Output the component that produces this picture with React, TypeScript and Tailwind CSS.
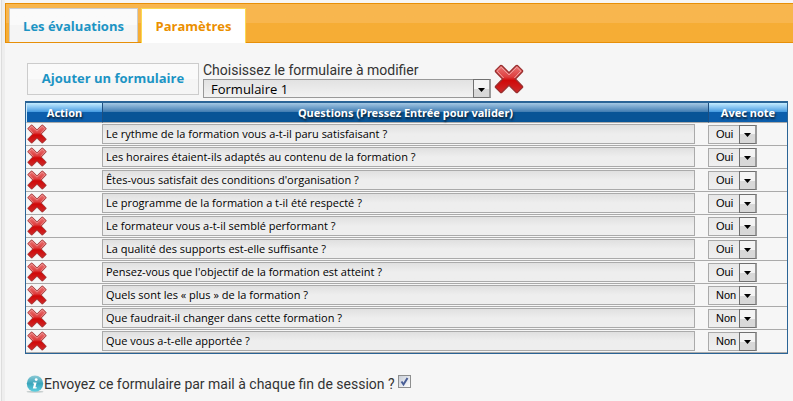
import React, { useState } from 'react';

const initialQuestions = [
  { text: 'Le rythme de la formation vous a-t-il paru satisfaisant ?', note: 'Oui' },
  { text: 'Les horaires étaient-ils adaptés au contenu de la formation ?', note: 'Oui' },
  { text: "Êtes-vous satisfait des conditions d'organisation ?", note: 'Oui' },
  { text: 'Le programme de la formation a t-il été respecté ?', note: 'Oui' },
  { text: 'Le formateur vous a-t-il semblé performant ?', note: 'Oui' },
  { text: 'La qualité des supports est-elle suffisante ?', note: 'Oui' },
  { text: "Pensez-vous que l'objectif de la formation est atteint ?", note: 'Oui' },
  { text: 'Quels sont les « plus » de la formation ?', note: 'Non' },
  { text: 'Que faudrait-il changer dans cette formation ?', note: 'Non' },
  { text: 'Que vous a-t-elle apportée ?', note: 'Non' },
];

function CrossIcon({ className }: { className: string }) {
  return (
    <svg viewBox="0 0 30 30" className={className} aria-hidden="true">
      <defs>
        <linearGradient id="cross" x1="0" y1="0" x2="0" y2="1">
          <stop offset="0" stopColor="#ea7878" />
          <stop offset="0.42" stopColor="#de4040" />
          <stop offset="0.55" stopColor="#d00808" />
          <stop offset="1" stopColor="#cc2c2c" />
        </linearGradient>
      </defs>
      <path
        d="M6.4 1.6 Q7.2 1 8 1.8 L15 8.8 L22 1.8 Q22.8 1 23.6 1.6 L28.4 6.4 Q29 7.2 28.2 8 L21.4 15 L28.2 22 Q29 22.8 28.4 23.6 L23.6 28.4 Q22.8 29 22 28.2 L15 21.4 L8 28.2 Q7.2 29 6.4 28.4 L1.6 23.6 Q1 22.8 1.8 22 L8.6 15 L1.8 8 Q1 7.2 1.6 6.4 Z"
        fill="url(#cross)"
        stroke="#983030"
        strokeWidth="1.3"
        strokeLinejoin="round"
      />
      <path
        d="M9.6 14 L3.2 7.2 L7.2 3.2 L15 10.8 L22.8 3.2 L26.8 7.2 L20.4 14"
        fill="none"
        stroke="#f0a4a4"
        strokeWidth="1"
      />
    </svg>
  );
}

function InfoIcon() {
  return (
    <svg viewBox="0 0 18 18" className="size-[18px]" aria-hidden="true">
      <defs>
        <linearGradient id="info" x1="0" y1="0" x2="0" y2="1">
          <stop offset="0" stopColor="#8fcbd6" />
          <stop offset="0.5" stopColor="#3aa5bb" />
          <stop offset="1" stopColor="#5fd0e0" />
        </linearGradient>
      </defs>
      <ellipse cx="9" cy="16.8" rx="8.5" ry="1" fill="#c4cccc" />
      <circle cx="9" cy="8.6" r="8.2" fill="url(#info)" />
      <circle cx="10.2" cy="4.6" r="1.4" fill="#fff" />
      <path d="M7 7.4 H10.6 L9.4 12.2 H10.8 L10.5 13.4 H6.8 L8.1 8.5 H6.8 Z" fill="#fff" />
    </svg>
  );
}

function ArrowButton() {
  return (
    <span className="pointer-events-none absolute inset-y-0 right-0 flex w-[18px] items-center justify-center border border-r-2 border-[#707070] border-r-[#999] bg-linear-to-b from-[#f4f4f4] from-50% to-[#d8d8d8] to-50% pt-0.5">
      <svg viewBox="0 0 7 4" className="h-1 w-[7px]" aria-hidden="true">
        <path d="M0 0 H7 L3.5 4 Z" fill="#000" />
      </svg>
    </span>
  );
}

export default function App() {
  const [questions, setQuestions] = useState(initialQuestions);
  const [sendMail, setSendMail] = useState(true);

  const update = (index: number, patch: Partial<(typeof initialQuestions)[number]>) =>
    setQuestions(questions.map((q, i) => (i === index ? { ...q, ...patch } : q)));

  return (
    <div className="flex min-h-screen bg-[#f6f6f6] font-['Trebuchet_MS','Open_Sans',sans-serif] text-[#333]">
      <div className="w-[5px] shrink-0 border-r-[3px] border-l border-[#eee] border-l-[#f6f6f6] bg-[#ddd]" />
      <div className="min-w-0 flex-1 pt-[3px]">
        {/* Tabs */}
        <nav className="flex h-10 items-end gap-[3px] border border-r-0 border-[#e78f08] bg-linear-to-b from-[#f8b64e] from-50% to-[#f6ad35] to-50% pl-[3px] text-[13px] font-bold">
          <a
            href="#evaluations"
            className="flex h-[34px] w-[129px] items-center justify-center border border-b-0 border-[#ccc] bg-linear-to-b from-[#fafafa] from-50% to-[#f5f5f5] to-50% pt-0.5 whitespace-nowrap text-[#1c94c4]"
          >
            Les évaluations
          </a>
          <a
            href="#parametres"
            className="-mb-px flex h-[35px] w-[105px] items-center justify-center border border-b-0 border-[#fbd850] bg-white pt-0.5 whitespace-nowrap text-[#eb8f00]"
          >
            Paramètres
          </a>
        </nav>

        <main className="pt-5 pr-[5px] pl-5">
          {/* Form selection */}
          <div className="flex h-[38px] pl-0.5">
            <button
              type="button"
              className="h-8 w-[172px] border border-[#ccc] bg-linear-to-b from-[#fafafa] from-50% to-[#f5f5f5] to-50% text-[13px] font-bold whitespace-nowrap text-[#1c94c4]"
            >
              Ajouter un formulaire
            </button>
            <div className="ml-1 w-[288px]">
              <label
                htmlFor="formulaire"
                className="block h-4 font-['Trebuchet_MS',Roboto,sans-serif] text-sm leading-[15px]"
              >
                Choisissez le formulaire à modifier
              </label>
              <div className="relative">
                <select
                  id="formulaire"
                  className="block h-[19px] w-full appearance-none border border-[#999] bg-linear-to-b from-[#e2e2e2] to-[#f2f2f2] pl-[7px] text-[13px] leading-4 text-black"
                >
                  <option>Formulaire 1</option>
                </select>
                <ArrowButton />
              </div>
            </div>
            <button type="button" aria-label="Supprimer le formulaire" className="ml-[3px] mt-px size-[30px]">
              <CrossIcon className="size-[30px]" />
            </button>
          </div>

          {/* Questions */}
          <table className="w-full table-fixed border-separate border-spacing-0 border border-t-2 border-[#2a6496]">
            <thead>
              <tr className="h-5 font-['Trebuchet_MS','Noto_Sans',sans-serif] text-[11px] leading-4 text-white [text-shadow:1px_2px_2px_#123]">
                <th className="w-[76px] border-b border-l border-[#aaa] border-l-[#cbe8fb] bg-linear-to-b from-[#c4ecff] via-[#4a9ee2] via-45% to-[#0c5eac] to-50% p-0">
                  Action
                </th>
                <th className="border-b border-l border-[#aaa] border-l-[#1d4f80] bg-linear-to-b from-[#a4c8e4] via-[#4580b4] via-45% to-[#085496] to-50% p-0">
                  Questions (Pressez Entrée pour valider)
                </th>
                <th className="w-[79px] border-b border-l border-[#aaa] border-l-[#1d4f80] bg-linear-to-b from-[#c4ecff] via-[#4a9ee2] via-45% to-[#0c5eac] to-50% p-0">
                  Avec note
                </th>
              </tr>
            </thead>
            <tbody>
              {questions.map((question, index) => (
                <tr key={index} className="h-[23px]">
                  <td className="border-b border-[#aaa] p-0 pl-px">
                    <button
                      type="button"
                      aria-label="Supprimer la question"
                      className="block size-5"
                      onClick={() => setQuestions(questions.filter((_, i) => i !== index))}
                    >
                      <CrossIcon className="size-5" />
                    </button>
                  </td>
                  <td className="border-b border-[#aaa] p-0 pr-[13px]">
                    <input
                      type="text"
                      aria-label={`Question ${index + 1}`}
                      value={question.text}
                      onChange={(e) => update(index, { text: e.target.value })}
                      className="block h-5 w-full border border-[#aaa] bg-linear-to-b from-[#e0e0e0] to-[#eee] to-50% px-[3px] pb-0.5 text-[11px] text-black"
                    />
                  </td>
                  <td className="border-b border-[#aaa] p-0">
                    <div className="relative w-[49px]">
                      <select
                        aria-label={`Avec note, question ${index + 1}`}
                        value={question.note}
                        onChange={(e) => update(index, { note: e.target.value })}
                        className="block h-[19px] w-full appearance-none border border-[#aaa] bg-linear-to-b from-[#e8e8e8] to-[#f0f0f0] pl-[7px] font-['Liberation_Sans',Arial,sans-serif] text-[11px] text-black"
                      >
                        <option>Oui</option>
                        <option>Non</option>
                      </select>
                      <ArrowButton />
                    </div>
                  </td>
                </tr>
              ))}
            </tbody>
          </table>

          <div className="mt-5 flex h-5 items-center pl-px">
            <InfoIcon />
            <label htmlFor="mail" className="font-['Trebuchet_MS',Roboto,sans-serif] text-sm">
              Envoyez ce formulaire par mail à chaque fin de session ?
            </label>
            <span className="relative ml-[3px] mt-px block size-[13px] self-start">
              <input
                id="mail"
                type="checkbox"
                checked={sendMail}
                onChange={(e) => setSendMail(e.target.checked)}
                className="block size-[13px] appearance-none border border-[#8e8f8f] bg-linear-to-br from-[#c8ced8] to-white"
              />
              {sendMail && (
                <svg viewBox="0 0 13 13" className="pointer-events-none absolute inset-0 size-[13px]" aria-hidden="true">
                  <path d="M3.5 6.5 L5.5 9.5 L9.5 3" fill="none" stroke="#4a5f97" strokeWidth="2" />
                </svg>
              )}
            </span>
          </div>
        </main>
      </div>
    </div>
  );
}
